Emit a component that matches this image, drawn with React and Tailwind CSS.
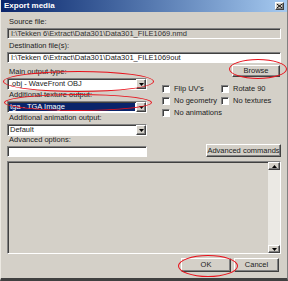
import React from "react";

const sunken =
  "border border-t-[#808080] border-l-[#808080] border-b-white border-r-white shadow-[inset_1px_1px_0_#404040]";
const raised =
  "border border-t-white border-l-white border-b-[#404040] border-r-[#404040] shadow-[inset_-1px_-1px_0_#808080] bg-[#d4d0c8]";

const Label = ({ children, className = "" }) => (
  <div className={`h-[10px] leading-[10px] pl-[2px] text-[#222] whitespace-nowrap ${className}`}>{children}</div>
);

const Arrow = ({ up }) => (
  <svg width="5" height="3" viewBox="0 0 5 3">
    <path d={up ? "M2.5 0L5 3H0z" : "M0 0h5L2.5 3z"} fill="#000" />
  </svg>
);

const Select = ({ value, selected }) => (
  <div className={`flex h-[12px] bg-white ${sunken}`}>
    <div className="flex-1 px-[1px] py-[1px]">
      <div
        className={`h-full leading-[8px] pl-[1px] ${
          selected ? "bg-[#0a246a] text-white" : "text-[#222]"
        }`}
      >
        {value}
      </div>
    </div>
    <div className={`w-[10px] flex items-center justify-center ${raised}`}>
      <Arrow />
    </div>
  </div>
);

const Check = ({ label }) => (
  <div className="flex items-center gap-[4px] h-[12px] whitespace-nowrap">
    <div className={`w-[8px] h-[8px] shrink-0 bg-white ${sunken}`} />
    <span className="text-[#222]">{label}</span>
  </div>
);

const Ring = ({ className }) => (
  <div className={`absolute border-[1.5px] border-[#e8101a] rounded-[50%] pointer-events-none ${className}`} />
);

export default function App() {
  return (
    <div
      className="relative w-[288px] h-[281px] bg-[#d4d0c8] overflow-hidden text-[7.5px] border-l border-l-[#ece9e2] border-r border-r-[#808080] border-b-[3px] border-b-[#404040]"
      style={{ fontFamily: '"Liberation Sans", Arial, sans-serif' }}
    >
      <div className="h-[12px] flex items-center justify-between pl-[3px] pr-[3px] bg-gradient-to-r from-[#0a246a] to-[#a6caf0]">
        <span className="font-bold text-white text-[8px]">Export media</span>
        <div className={`w-[9px] h-[8px] flex items-center justify-center ${raised}`}>
          <svg width="5" height="4" viewBox="0 0 5 4">
            <path d="M0 0L5 4M5 0L0 4" stroke="#000" strokeWidth="1" />
          </svg>
        </div>
      </div>

      <div className="px-[6px] pt-[5px] flex flex-col">
        <Label>Source file:</Label>
        <div className={`h-[11px] mt-[1px] leading-[9px] pl-[3px] text-[#333] bg-[#d4d0c8] ${sunken}`}>
          I:\Tekken 6\Extract\Data301\Data301_FILE1069.nmd
        </div>
        <Label className="mt-[2px]">Destination file(s):</Label>
        <div className={`h-[11px] mt-[1px] leading-[9px] pl-[3px] text-[#222] bg-white ${sunken}`}>
          I:\Tekken 6\Extract\Data301\Data301_FILE1069out
        </div>

        <div className="flex">
          <div className="w-[140px] flex flex-col">
            <Label className="mt-[4px]">Main output type:</Label>
            <div className="mt-[1px]">
              <Select value=".obj - WaveFront OBJ" />
            </div>
            <Label>Additional texture output:</Label>
            <div className="mt-[1px]">
              <Select value="tga - TGA Image" selected />
            </div>
            <Label>Additional animation output:</Label>
            <div className="mt-[1px]">
              <Select value="Default" />
            </div>
            <Label className="!h-[9px] !leading-[8px]">Advanced options:</Label>
            <div className={`h-[11px] mt-[1px] bg-white ${sunken}`} />
          </div>

          <div className="flex-1 flex flex-col pl-[15px]">
            <div className="flex justify-end pr-[1px] mt-[2px]">
              <div className={`w-[48px] h-[12px] flex items-center justify-center text-[#222] ${raised}`}>
                Browse
              </div>
            </div>
            <div className="grid grid-cols-[59px_1fr] mt-[6px]">
              <Check label="Flip UV's" />
              <Check label="Rotate 90" />
              <Check label="No geometry" />
              <Check label="No textures" />
              <Check label="No animations" />
            </div>
            <div className="flex-1" />
            <div className="flex justify-end">
              <div className={`w-[75px] shrink-0 h-[13px] flex items-center justify-center text-[#222] ${raised}`}>
                Advanced commands
              </div>
            </div>
          </div>
        </div>

        <div className={`h-[93px] mt-[4px] flex bg-[#d4d0c8] ${sunken}`}>
          <div className="flex-1" />
          <div className="w-[12px] flex flex-col bg-[#ebe9e4]">
            <div className={`h-[8px] flex items-center justify-center ${raised}`}>
              <Arrow up />
            </div>
            <div className="flex-1" />
            <div className={`h-[8px] flex items-center justify-center ${raised}`}>
              <Arrow />
            </div>
          </div>
        </div>

        <div className="flex justify-end gap-[3px] mt-[4px] pr-[2px]">
          <div className={`w-[50px] h-[14px] flex items-center justify-center text-[#222] ${raised}`}>OK</div>
          <div className={`w-[45px] h-[14px] flex items-center justify-center text-[#222] ${raised}`}>Cancel</div>
        </div>
      </div>

      <Ring className="left-[2px] top-[71px] w-[151px] h-[21px]" />
      <Ring className="left-[3px] top-[94px] w-[148px] h-[17px]" />
      <Ring className="left-[228px] top-[59px] w-[58px] h-[20px]" />
      <Ring className="left-[177px] top-[255px] w-[60px] h-[22px]" />
    </div>
  );
}
